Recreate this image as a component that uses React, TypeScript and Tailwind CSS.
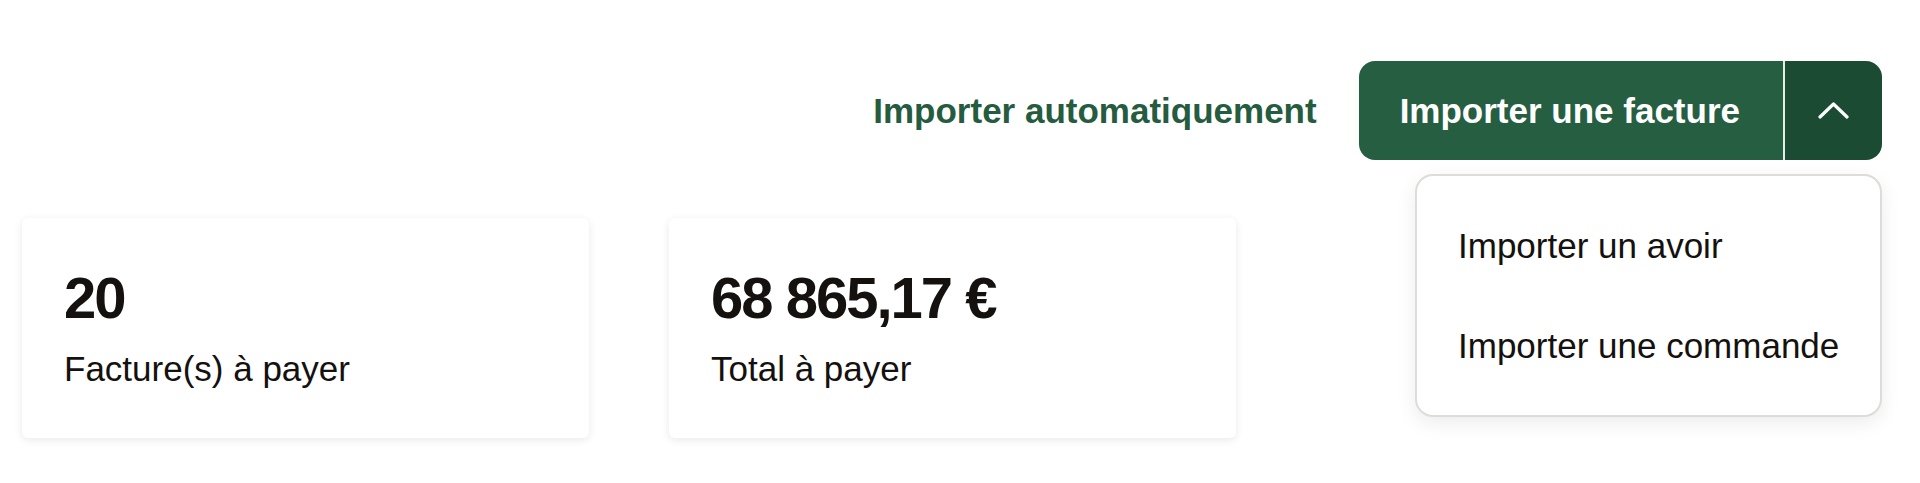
import { useState } from "react";

const stats = [
  { value: "20", label: "Facture(s) à payer" },
  { value: "68 865,17 €", label: "Total à payer" },
];

const menuItems = ["Importer un avoir", "Importer une commande"];

export default function App() {
  const [open, setOpen] = useState(true);

  return (
    <div className="min-h-screen bg-white pt-[61px] pl-[22px] pr-[38px] font-['Liberation_Sans',Arial,sans-serif] text-[#14110f]">
      {/* Actions */}
      <div className="flex items-center justify-end gap-[42px]">
        <button className="text-[35px] font-bold leading-none text-[#255c40]">
          Importer automatiquement
        </button>
        <div className="relative">
          <div className="flex h-[99px] overflow-hidden rounded-[16px]">
            <button className="flex items-center bg-[#265e42] pl-[41px] pr-[43px] text-[35px] font-bold leading-none text-white">
              Importer une facture
            </button>
            <div className="w-[2px] bg-[#e4ece7]" />
            <button
              onClick={() => setOpen(!open)}
              className="flex w-[97px] items-center justify-center bg-[#1c4b33]"
            >
              <svg className="h-[17px] w-[31px]" viewBox="0 0 31 17" fill="none" stroke="white" strokeWidth={3.2} strokeLinecap="round" strokeLinejoin="round">
                <path d={open ? "M2 15L15.5 2L29 15" : "M2 2L15.5 15L29 2"} />
              </svg>
            </button>
          </div>

          {open && (
            <div className="absolute right-0 top-[113px] z-10 w-[467px] rounded-[18px] border-2 border-[#dddcd8] bg-white pt-[19px] pb-[20px] shadow-[0_6px_20px_rgba(0,0,0,0.08)]">
              {menuItems.map((item) => (
                <div key={item} className="flex h-[100px] items-center pl-[41px] text-[35px] leading-none text-[#14110f]">
                  {item}
                </div>
              ))}
            </div>
          )}
        </div>
      </div>

      {/* Stat cards */}
      <div className="mt-[58px] flex gap-[80px]">
        {stats.map((s) => (
          <div
            key={s.label}
            className="w-[567px] rounded-[6px] bg-white pl-[42px] pt-[51px] pb-[52px] shadow-[0_2px_8px_rgba(0,0,0,0.09)]"
          >
            <div className="text-[58px] font-bold leading-none tracking-[-2px]">{s.value}</div>
            <div className="mt-[24px] text-[35px] leading-none">{s.label}</div>
          </div>
        ))}
      </div>
    </div>
  );
}
